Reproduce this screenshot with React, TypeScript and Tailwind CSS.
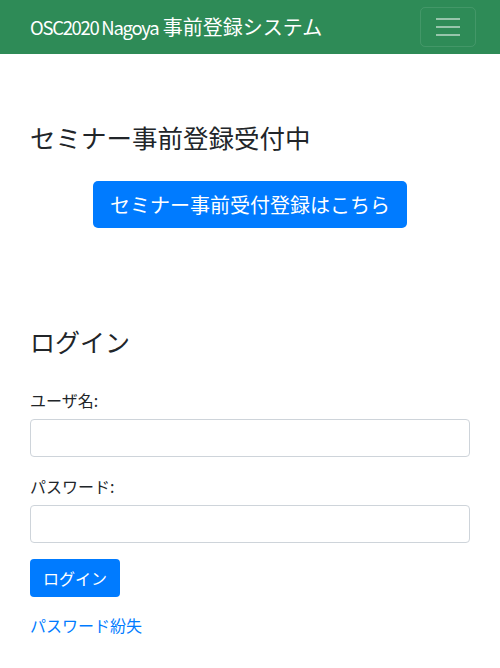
import React from 'react';

const font = { fontFamily: '"Noto Sans CJK JP", "Noto Sans", sans-serif' };

const App: React.FC = () => {
  return (
    <div className="min-h-[668px] bg-white text-[#212529]" style={font}>
      {/* Navbar */}
      <nav className="h-[54px] bg-[#2e8b57] flex items-center justify-between pl-[30px] pr-[24px]">
        <span className="text-white text-[20px] leading-none whitespace-nowrap">
          <span className="text-[18.5px] tracking-[-1.3px]">OSC2020 Nagoya</span> 事前登録システム
        </span>
        <button className="w-[56px] h-[40px] border border-white/10 rounded-[5px] flex flex-col items-center justify-center gap-[6px]">
          <span className="block w-[24px] h-[2px] bg-white/50" />
          <span className="block w-[24px] h-[2px] bg-white/50" />
          <span className="block w-[24px] h-[2px] bg-white/50" />
        </button>
      </nav>

      <main className="px-[30px]">
        {/* Seminar */}
        <section className="pt-[68px]">
          <h2 className="text-[25.5px] leading-[30px] font-normal">セミナー事前登録受付中</h2>
          <div className="flex justify-center mt-[29px]">
            <button className="h-[47px] px-[17px] bg-[#007bff] text-white text-[20px] rounded-[5px]">
              セミナー事前受付登録はこちら
            </button>
          </div>
        </section>

        {/* Login */}
        <section className="mt-[98px]">
          <h2 className="text-[25px] leading-[30px] font-normal">ログイン</h2>
          <form className="mt-[32px]">
            <label className="block text-[16px] leading-[24px] mb-[7px]">ユーザ名:</label>
            <input type="text" className="block w-full h-[38px] border border-[#ced4da] rounded-[4px] px-3 outline-none" />
            <label className="block text-[16px] leading-[24px] mt-[17px] mb-[7px]">パスワード:</label>
            <input type="password" className="block w-full h-[38px] border border-[#ced4da] rounded-[4px] px-3 outline-none" />
            <button type="button" className="mt-[16px] h-[38px] w-[90px] bg-[#007bff] text-white text-[16px] rounded-[4px]">
              ログイン
            </button>
          </form>
          <a href="#" className="block mt-[16px] text-[#007bff] text-[16px] leading-[24px] w-fit">パスワード紛失</a>
        </section>
      </main>
    </div>
  );
};

export default App;
